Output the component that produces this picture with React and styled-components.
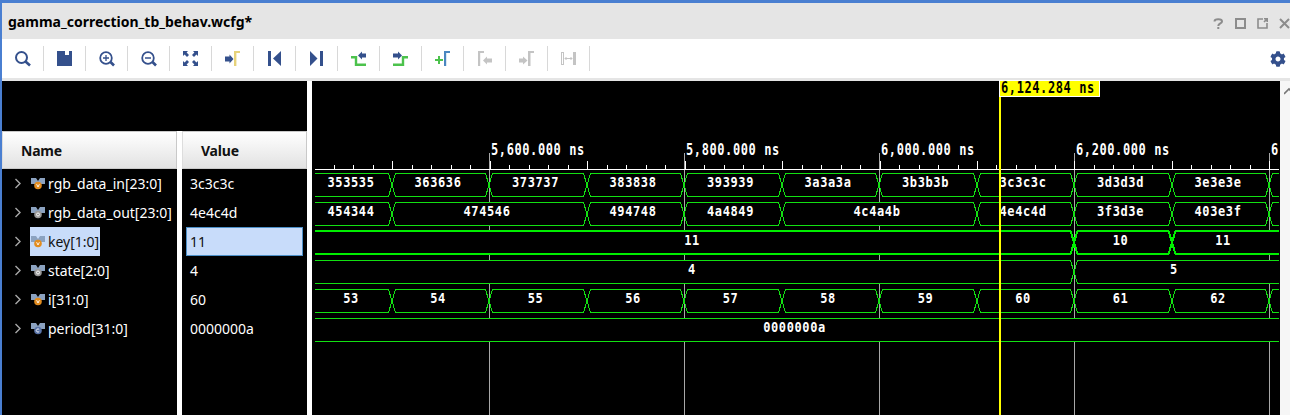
import React from 'react'
import styled, { createGlobalStyle } from 'styled-components'
import { FaCog } from 'react-icons/fa'

const GlobalStyle = createGlobalStyle`
  html, body { margin: 0; padding: 0; background: #fff; overflow: hidden; }
`

const Page = styled.div`
  width: 1290px;
  height: 415px;
  overflow: hidden;
  display: flex;
  flex-direction: column;
  border-top: 3px solid #4a7fd1;
  box-sizing: border-box;
  font-family: "Noto Sans", "Liberation Sans", sans-serif;
`
const Window = styled.div`
  flex: 1;
  min-height: 0;
  display: flex;
  flex-direction: column;
  border-left: 2px solid #4a7fd1;
`
const TitleBar = styled.div`
  height: 36px;
  flex: none;
  background: #e5e5e5;
  display: flex;
  align-items: center;
`
const Title = styled.div`
  padding-left: 6px;
  font-size: 14px;
  font-weight: 700;
  color: #000;
  white-space: nowrap;
`
const WinButtons = styled.div`
  margin-left: auto;
  display: flex;
  gap: 11px;
  padding-top: 5px;
`
const WinGlyph = styled.svg`
  width: 11px;
  height: 11px;
  display: block;
  fill: none;
  stroke: #8c8c8c;
  stroke-width: 2;
`
const Toolbar = styled.div`
  height: 39px;
  flex: none;
  background: #fff;
  display: flex;
  align-items: center;
  border-bottom: 3px solid #e5e5e5;
`
const Tool = styled.div`
  width: 42px;
  height: 25px;
  box-sizing: border-box;
  padding: 3px 0 0 10px;
  border-right: 1px solid #d8d8d8;
`
const ToolIcon = styled.svg`
  width: 20px;
  height: 20px;
  display: block;
`
const GearSlot = styled.div`
  margin-left: auto;
  padding-right: 4px;
  height: 16px;
  color: #34508c;
  font-size: 16px;
  line-height: 16px;
`
const Main = styled.div`
  flex: 1;
  min-height: 0;
  display: flex;
  background: #fff;
`
const SidePanel = styled.div`
  width: 305px;
  flex: none;
  display: flex;
  flex-direction: column;
  background: #000;
`
const SideTop = styled.div`
  height: 50px;
  flex: none;
`
const Columns = styled.div`
  flex: 1;
  display: flex;
  gap: 5px;
  background: #fff;
`
const Column = styled.div`
  width: ${p => p.$width}px;
  background: #000;
`
const HeaderCell = styled.div`
  height: 38px;
  box-sizing: border-box;
  padding-left: ${p => p.$indent}px;
  display: flex;
  align-items: center;
  font-size: 14px;
  font-weight: 700;
  letter-spacing: -0.2px;
  color: #111;
  background: linear-gradient(#fff, #e2e2e2);
  border: 1px solid #c9c9c9;
  border-left-color: #ddd;
`
const NameRow = styled.div`
  height: 29px;
  display: flex;
  align-items: center;
`
const Chevron = styled.svg`
  width: 8px;
  height: 11px;
  margin-left: 12px;
  margin-right: 8px;
  flex: none;
  fill: none;
  stroke: #a8a8a8;
  stroke-width: 1.4;
`
const NameLabel = styled.div`
  height: 29px;
  display: flex;
  align-items: center;
  gap: 3px;
  padding: 0 1px 0 1px;
  font-size: 14px;
  white-space: nowrap;
  color: ${p => (p.$selected ? '#111' : '#fff')};
  background: ${p => (p.$selected ? '#c8dcfa' : 'transparent')};
`
const SignalIcon = styled.svg`
  width: 14px;
  height: 12px;
  flex: none;
`
const ValueCell = styled.div`
  height: 29px;
  box-sizing: border-box;
  margin: 0 4px;
  padding-left: 3px;
  display: flex;
  align-items: center;
  font-size: 14px;
  color: ${p => (p.$selected ? '#111' : '#fff')};
  background: ${p => (p.$selected ? '#c8dcfa' : 'transparent')};
  border: 1px solid ${p => (p.$selected ? '#4d90c8' : 'transparent')};
`
const Gutter = styled.div`
  width: 5px;
  flex: none;
  background: #fff;
`
const WaveSvg = styled.svg`
  width: 968px;
  height: 334px;
  flex: none;
  display: block;
  background: #000;
  overflow: visible;
`
const WaveLabel = styled.text`
  font-family: "DejaVu Sans Mono", "Liberation Mono", monospace;
  font-size: 12px;
  font-weight: 700;
  letter-spacing: 0.6px;
  fill: ${p => p.$color || '#fff'};
  text-anchor: ${p => p.$anchor || 'middle'};
`
const Scrollbar = styled.div`
  width: 10px;
  flex: none;
  background: #f6f6f6;
  overflow: hidden;
`
const ScrollUp = styled.svg`
  width: 10px;
  height: 10px;
  display: block;
  margin: 5px 0 0 4px;
  fill: none;
  stroke: #777;
  stroke-width: 1.6;
`

const NAVY = '#34508c'
const GREEN = '#4cc24c'
const YELLOW = '#e6d27a'
const BLUE = '#4a86c0'
const GREY = '#c4c4c4'

const toolIcons = [
  <g key="search" fill="none" stroke={NAVY}>
    <circle cx="9.5" cy="8.5" r="5.5" strokeWidth="2" />
    <path d="M13.5 12.5L18 16.5" strokeWidth="2.6" />
  </g>,
  <path key="save" fill={NAVY} fillRule="evenodd" d="M3 2H18V17H3ZM11 2H15V6H11Z" />,
  <g key="in" fill="none" stroke={NAVY}>
    <circle cx="10" cy="9" r="5.8" strokeWidth="1.8" />
    <path d="M7 9H13M10 6V12" strokeWidth="1.3" />
    <path d="M14.5 13L18 16.5" strokeWidth="2.6" />
  </g>,
  <g key="out" fill="none" stroke={NAVY}>
    <circle cx="10" cy="9" r="5.8" strokeWidth="1.8" />
    <path d="M7 9H13" strokeWidth="1.5" />
    <path d="M14.5 13L18 16.5" strokeWidth="2.6" />
  </g>,
  <path
    key="fit"
    fill={NAVY}
    d="M3 2H8L6.6 3.6L9 6L7 8L4.6 5.6L3 7ZM18 2H13L14.4 3.6L12 6L14 8L16.4 5.6L18 7ZM3 17H8L6.6 15.4L9 13L7 11L4.6 13.4L3 12ZM18 17H13L14.4 15.4L12 13L14 11L16.4 13.4L18 12Z"
  />,
  <g key="goto">
    <path fill={NAVY} d="M3 7.5H7.5V5.5L11.5 10L7.5 14.5V12.5H3Z" />
    <path fill={YELLOW} d="M12 2H18V4H14.4V17H12Z" />
  </g>,
  <path key="first" fill={NAVY} d="M4 2H7V17H4ZM17 2V17L9 9.5Z" />,
  <path key="last" fill={NAVY} d="M4 2V17L11.5 9.5ZM14 2H17V17H14Z" />,
  <g key="prevedge">
    <path fill="none" stroke={GREEN} strokeWidth="2.4" d="M3 8.2H8V15.8H18" />
    <path fill={NAVY} d="M10 6.5L14 2.5V4.5H18V8.5H14V10.5Z" />
  </g>,
  <g key="nextedge">
    <path fill="none" stroke={GREEN} strokeWidth="2.4" d="M3 15.8H13V8.2H18" />
    <path fill={NAVY} d="M3 4.5H8V2.5L12 6.5L8 10.5V8.5H3Z" />
  </g>,
  <g key="add">
    <path fill={GREEN} d="M6 7H8V10H11V12H8V15H6V12H3V10H6Z" />
    <path fill={BLUE} d="M12 2H18V4H14.2V17H12Z" />
  </g>,
  <g key="prevmark" fill={GREY}>
    <path d="M4 2H10V4H6.2V17H4Z" />
    <path d="M9 11.5L13 7.5V9.5H18V13.5H13V15.5Z" />
  </g>,
  <g key="nextmark" fill={GREY}>
    <path d="M3 9.5H7V7.5L11.5 11.5L7 15.5V13.5H3Z" />
    <path d="M12 2H18V4H14.5V17H12Z" />
  </g>,
  <g key="swap">
    <rect x="3.5" y="3.5" width="2" height="12" fill="none" stroke={GREY} />
    <path fill="none" stroke={GREY} d="M7 9.5H14M8.5 8L7 9.5L8.5 11M12.5 8L14 9.5L12.5 11" />
    <rect x="15" y="3" width="3" height="13" fill={GREY} />
  </g>,
]

const signals = [
  { name: 'rgb_data_in[23:0]', value: '3c3c3c', dot: '#e28c1f', mark: 'v' },
  { name: 'rgb_data_out[23:0]', value: '4e4c4d', dot: '#9a9a9a', mark: 'o' },
  { name: 'key[1:0]', value: '11', dot: '#e28c1f', mark: 'v', selected: true },
  { name: 'state[2:0]', value: '4', dot: '#9a9a9a', mark: 'o' },
  { name: 'i[31:0]', value: '60', dot: '#e28c1f', mark: 'v' },
  { name: 'period[31:0]', value: '0000000a', dot: '#5a74a8', mark: 'c' },
]

const Medal = ({ dot, mark }) => (
  <SignalIcon viewBox="0 0 14 12">
    <path fill="#8ba2c0" d="M0 0H5L7 3L9 0H14V6H10V7H4V6H0Z" />
    <circle cx="7" cy="7.5" r="3.8" fill={dot} />
    {mark === 'v' && <path d="M5.6 6.2L7 9L8.4 6.2" fill="none" stroke="#fff" strokeWidth="0.9" />}
    {mark === 'o' && <circle cx="7" cy="7.5" r="1.5" fill="none" stroke="#fff" strokeWidth="0.9" />}
    {mark === 'c' && <path d="M8.2 6.5A1.6 1.6 0 1 0 8.2 8.5" fill="none" stroke="#fff" strokeWidth="0.9" />}
  </SignalIcon>
)

// wave canvas uses page coordinates through its viewBox
const START = 315
const END = 1279
const EDGES = [START, 392, 489, 587, 684, 782, 879, 977, 1074, 1172, 1269, END]
const GRID = [489, 684, 879, 1074, 1269]
const TIMES = ['5,600.000 ns', '5,800.000 ns', '6,000.000 ns', '6,200.000 ns', '6']

const each = list => list.map(v => [v, 1])

const rows = [
  { top: 173, spans: each(['353535', '363636', '373737', '383838', '393939', '3a3a3a', '3b3b3b', '3c3c3c', '3d3d3d', '3e3e3e', '']) },
  { top: 202, spans: [['454344', 1], ['474546', 2], ['494748', 1], ['4a4849', 1], ['4c4a4b', 2], ['4e4c4d', 1], ['3f3d3e', 1], ['403e3f', 1], ['', 1]] },
  { top: 231, thick: true, spans: [['11', 8], ['10', 1], ['11', 2]] },
  { top: 260, spans: [['4', 8], ['5', 3]] },
  { top: 289, spans: each(['53', '54', '55', '56', '57', '58', '59', '60', '61', '62', '']) },
  { top: 318, spans: [['0000000a', 11]] },
]

const line = pts => 'M' + pts.map(p => p.join(' ')).join('L')

const segment = (a, b, top, bottom) => {
  const h = 3.5
  const mid = (top + bottom) / 2
  const chain = y => [
    ...(a === START ? [[a, y]] : [[a, mid], [a + h, y]]),
    ...(b === END ? [[b, y]] : [[b - h, y], [b, mid]]),
  ]
  const upper = chain(top)
  const lower = chain(bottom)
  return {
    fill: line([...upper, ...[...lower].reverse()]) + 'Z',
    stroke: line(upper) + line(lower),
  }
}

// flatten a row into its bus segments
const segmentsOf = row => {
  const off = row.thick ? 0 : 0.5
  let i = 0
  return row.spans.map(([label, span], n) => {
    const a = EDGES[i]
    const b = EDGES[i + span]
    i += span
    return {
      key: `${row.top}-${n}`,
      label,
      thick: row.thick,
      labelX: (a + b) / 2 - 2.5,
      labelY: row.top + 14,
      ...segment(a, b, row.top + off, row.top + 23 + off),
    }
  })
}
const segments = rows.flatMap(segmentsOf)

const Ticks = () => {
  const ticks = []
  for (let k = -3; k <= 45; k++) {
    const x = Math.round(392.3 + 19.49 * k) + 0.5
    if (x > END) break
    ticks.push(<path key={k} d={`M${x} ${k % 5 === 0 ? 161 : 165}V169`} stroke="#fff" />)
  }
  return (
    <g shapeRendering="crispEdges">
      {ticks}
      <path d={`M${START} 169.5H${END}`} stroke="#fff" />
    </g>
  )
}

const TallText = ({ x, y, stretch, children, ...rest }) => (
  <WaveLabel transform={`translate(${x} ${y}) scale(1 ${stretch})`} {...rest}>{children}</WaveLabel>
)

const App = () => (
  <>
    <GlobalStyle />
    <Page>
      <Window>
        <TitleBar>
          <Title>gamma_correction_tb_behav.wcfg*</Title>
          <WinButtons>
            <WinGlyph viewBox="0 0 11 11">
              <path d="M1.5 3.5C1.5 0.5 9 0.5 9 3.5C9 5.5 5.3 5.5 5.3 8" />
              <path d="M5.3 9V11" />
            </WinGlyph>
            <WinGlyph viewBox="0 0 11 11">
              <rect x="1" y="1" width="9" height="9" />
            </WinGlyph>
            <WinGlyph viewBox="0 0 11 11">
              <path d="M6 1H1V10H10V5M7 4L10.5 0.5M7 0.8H10.2V4" strokeWidth="1.6" />
            </WinGlyph>
            <WinGlyph viewBox="0 0 11 11">
              <path d="M1 1L10 10M10 1L1 10" />
            </WinGlyph>
          </WinButtons>
        </TitleBar>
        <Toolbar>
          {toolIcons.map(icon => (
            <Tool key={icon.key}>
              <ToolIcon viewBox="0 0 20 20">{icon}</ToolIcon>
            </Tool>
          ))}
          <GearSlot>
            <FaCog />
          </GearSlot>
        </Toolbar>
        <Main>
          <SidePanel>
            <SideTop />
            <Columns>
              <Column $width={175}>
                <HeaderCell $indent={18}>Name</HeaderCell>
                {signals.map(s => (
                  <NameRow key={s.name}>
                    <Chevron viewBox="0 0 8 11">
                      <path d="M1.5 1L6 5.5L1.5 10" />
                    </Chevron>
                    <NameLabel $selected={s.selected}>
                      <Medal dot={s.dot} mark={s.mark} />
                      {s.name}
                    </NameLabel>
                  </NameRow>
                ))}
              </Column>
              <Column $width={125}>
                <HeaderCell $indent={18}>Value</HeaderCell>
                {signals.map(s => (
                  <ValueCell key={s.name} $selected={s.selected}>{s.value}</ValueCell>
                ))}
              </Column>
            </Columns>
          </SidePanel>
          <Gutter />
          <WaveSvg viewBox="312 81 968 334">
            {GRID.map((x, i) => (
              <g key={x}>
                <path d={`M${x + 0.5} 153V415`} stroke="#a8a8a8" shapeRendering="crispEdges" />
                <TallText $anchor="start" x={x + 2} y={155} stretch={1.25}>{TIMES[i]}</TallText>
              </g>
            ))}
            <Ticks />
            {segments.map(s => (
              <path key={s.key} d={s.fill} fill="#000" shapeRendering="crispEdges" />
            ))}
            {segments.map(s => (
              <path
                key={s.key}
                d={s.stroke}
                fill="none"
                stroke={s.thick ? '#00ee00' : '#12e012'}
                strokeWidth={s.thick ? 2 : 1}
                shapeRendering="crispEdges"
              />
            ))}
            {segments.filter(s => s.label).map(s => (
              <TallText key={s.key} x={s.labelX} y={s.labelY} stretch={1.15}>{s.label}</TallText>
            ))}
            <rect x="999" y="81" width="2" height="334" fill="#ffff00" />
            <rect x="999.5" y="80.5" width="100" height="16" fill="#ffff00" stroke="#fff" shapeRendering="crispEdges" />
            <TallText $anchor="start" $color="#000" x={1001} y={93} stretch={1.25}>6,124.284 ns</TallText>
          </WaveSvg>
          <Scrollbar>
            <ScrollUp viewBox="0 0 10 10">
              <path d="M0 8L5 3L10 8" />
            </ScrollUp>
          </Scrollbar>
        </Main>
      </Window>
    </Page>
  </>
)

export default App
